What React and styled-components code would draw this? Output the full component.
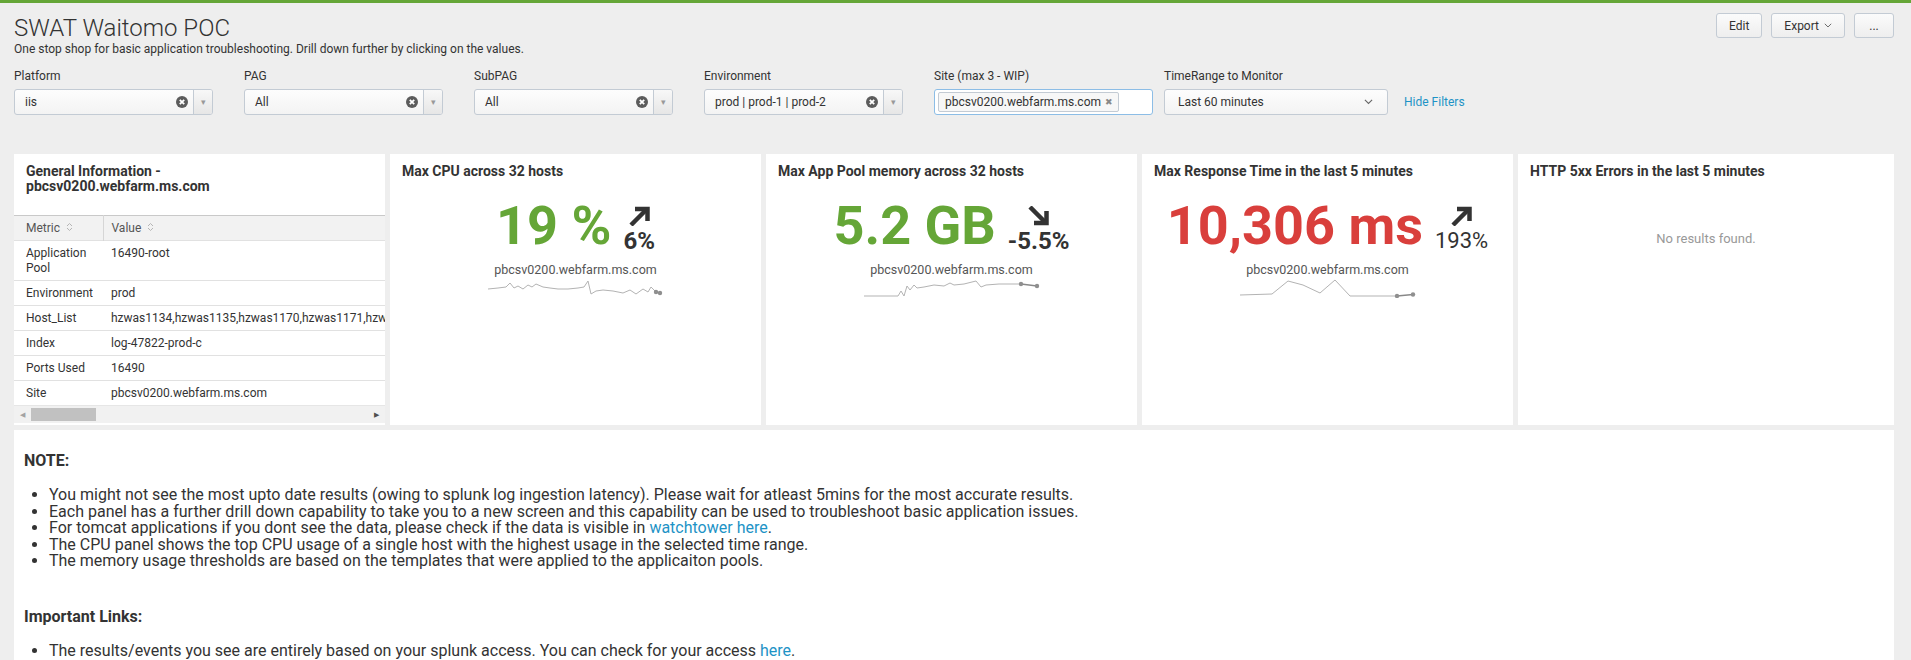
import React from "react";
import styled, { createGlobalStyle } from "styled-components";

const GlobalStyle = createGlobalStyle`
  html, body { margin: 0; padding: 0; }
  body {
    background: #eeeeee;
    font-family: Roboto, "Liberation Sans", Arial, sans-serif;
    color: #333;
    overflow: hidden;
  }
`;

const filters = [
  { label: "Platform", value: "iis", width: 199 },
  { label: "PAG", value: "All", width: 199 },
  { label: "SubPAG", value: "All", width: 199 },
  { label: "Environment", value: "prod | prod-1 | prod-2", width: 199 },
];

const infoRows = [
  ["Application Pool", "16490-root"],
  ["Environment", "prod"],
  ["Host_List", "hzwas1134,hzwas1135,hzwas1170,hzwas1171,hzwas1172,hzwas1173"],
  ["Index", "log-47822-prod-c"],
  ["Ports Used", "16490"],
  ["Site", "pbcsv0200.webfarm.ms.com"],
];

const singles = [
  {
    title: "Max CPU across 32 hosts",
    value: "19 %",
    color: "#65a637",
    delta: "6%",
    up: true,
    weight: 700,
    size: 24,
    spark: [[0,10],[10,9],[18,8],[22,4],[26,9],[30,7],[35,10],[40,6],[44,8],[48,5],[55,8],[62,9],[70,10],[80,10],[90,9],[96,8],[100,2],[103,15],[108,12],[115,11],[125,12],[135,14],[142,11],[148,15],[155,10],[160,13],[163,8],[168,13],[172,14]],
    tail: [[168,13],[172,14]],
  },
  {
    title: "Max App Pool memory across 32 hosts",
    value: "5.2 GB",
    color: "#65a637",
    delta: "-5.5%",
    up: false,
    weight: 700,
    size: 24,
    spark: [[0,17],[34,17],[37,12],[40,17],[43,7],[46,11],[50,6],[53,9],[60,8],[70,6],[80,7],[86,4],[90,6],[100,5],[112,2],[117,8],[122,6],[135,5],[145,5],[157,5]],
    tail: [[157,5],[173,7]],
  },
  {
    title: "Max Response Time in the last 5 minutes",
    value: "10,306 ms",
    color: "#d93f3c",
    delta: "193%",
    up: true,
    weight: 400,
    size: 22,
    spark: [[0,16],[32,15],[48,2],[63,6],[80,14],[95,1],[110,17],[157,17]],
    tail: [[157,17],[173,15.5]],
  },
];

function ClearIcon() {
  return (
    <svg width="12" height="12" viewBox="0 0 12 12">
      <circle cx="6" cy="6" r="6" fill="#5c5c5c" />
      <path d="M3.8 3.8 L8.2 8.2 M8.2 3.8 L3.8 8.2" stroke="#fff" strokeWidth="1.8" />
    </svg>
  );
}

function SortIcon() {
  return (
    <svg width="7" height="10" viewBox="0 0 7 10">
      <path d="M1 4 L3.5 1.5 L6 4 M1 6 L3.5 8.5 L6 6" stroke="#b5b5b5" strokeWidth="1" fill="none" />
    </svg>
  );
}

function Chevron({ size = 9, color = "#555" }) {
  return (
    <svg width={size} height={size * 0.6} viewBox="0 0 10 6">
      <path d="M1 1 L5 5 L9 1" stroke={color} strokeWidth="1.2" fill="none" />
    </svg>
  );
}

function TrendArrow({ up }) {
  return (
    <svg width="23" height="20" viewBox="0 0 23 20">
      {up ? (
        <g stroke="#333" strokeWidth="4.5" fill="none" strokeLinejoin="miter">
          <path d="M3 19 L18 4" />
          <path d="M7 3 H19.5 V15" />
        </g>
      ) : (
        <g stroke="#333" strokeWidth="4.5" fill="none" strokeLinejoin="miter">
          <path d="M3 1 L18 16" />
          <path d="M19.5 5 V17 H7" />
        </g>
      )}
    </svg>
  );
}

function Sparkline({ points, tail }) {
  const line = points.map((p) => p.join(",")).join(" ");
  return (
    <svg width="176" height="20" viewBox="0 -1 176 20">
      <polyline points={line} fill="none" stroke="#b3b3b3" strokeWidth="1" />
      <polyline points={tail.map((p) => p.join(",")).join(" ")} fill="none" stroke="#888" strokeWidth="1.3" />
      {tail.map((p, i) => (
        <circle key={i} cx={p[0]} cy={p[1]} r="2.2" fill="#8f8f8f" />
      ))}
    </svg>
  );
}

export default function App() {
  return (
    <Page>
      <GlobalStyle />
      <Header>
        <div>
          <Title>SWAT Waitomo POC</Title>
          <Description>
            One stop shop for basic application troubleshooting. Drill down further by clicking on the values.
          </Description>
        </div>
        <Actions>
          <Button>Edit</Button>
          <Button>
            Export <Chevron size={8} color="#666" />
          </Button>
          <Button $wide>...</Button>
        </Actions>
      </Header>

      <Filters>
        {filters.map((f) => (
          <Field key={f.label}>
            <Label>{f.label}</Label>
            <Select $w={f.width}>
              <SelectValue>{f.value}</SelectValue>
              <ClearWrap>
                <ClearIcon />
              </ClearWrap>
              <Toggle>▾</Toggle>
            </Select>
          </Field>
        ))}
        <Field>
          <Label>Site (max 3 - WIP)</Label>
          <Multi>
            <Token>
              pbcsv0200.webfarm.ms.com <TokenX>✖</TokenX>
            </Token>
          </Multi>
        </Field>
        <Field $auto>
          <Label>TimeRange to Monitor</Label>
          <Row>
            <TimeSelect>
              <span>Last 60 minutes</span>
              <Chevron size={9} color="#666" />
            </TimeSelect>
            <HideLink>Hide Filters</HideLink>
          </Row>
        </Field>
      </Filters>

      <PanelRow>
        <Panel>
          <InfoTitle>General Information - pbcsv0200.webfarm.ms.com</InfoTitle>
          <TableClip>
            <Table>
              <colgroup>
                <col style={{ width: 89 }} />
                <col />
              </colgroup>
              <thead>
                <tr>
                  <Th>
                    Metric <SortIcon />
                  </Th>
                  <Th>
                    Value <SortIcon />
                  </Th>
                </tr>
              </thead>
              <tbody>
                {infoRows.map(([k, v]) => (
                  <tr key={k}>
                    <Td>{k}</Td>
                    <Td $nowrap>{v}</Td>
                  </tr>
                ))}
              </tbody>
            </Table>
          </TableClip>
          <ScrollBar>
            <ScrollArrow $color="#a3a3a3">◀</ScrollArrow>
            <ScrollThumb />
            <ScrollArrow $color="#505050">▶</ScrollArrow>
          </ScrollBar>
        </Panel>

        {singles.map((s) => (
          <Panel key={s.title}>
            <PanelTitle>{s.title}</PanelTitle>
            <SingleBody>
              <ValueRow>
                <BigValue $color={s.color}>{s.value}</BigValue>
                <Delta>
                  <TrendArrow up={s.up} />
                  <DeltaText $weight={s.weight} $size={s.size}>{s.delta}</DeltaText>
                </Delta>
              </ValueRow>
              <Underlabel>pbcsv0200.webfarm.ms.com</Underlabel>
              <Sparkline points={s.spark} tail={s.tail} />
            </SingleBody>
          </Panel>
        ))}

        <Panel $last>
          <PanelTitle>HTTP 5xx Errors in the last 5 minutes</PanelTitle>
          <NoResults>No results found.</NoResults>
        </Panel>
      </PanelRow>

      <NotePanel>
        <NoteHeading>NOTE:</NoteHeading>
        <NoteList>
          <li>You might not see the most upto date results (owing to splunk log ingestion latency). Please wait for atleast 5mins for the most accurate results.</li>
          <li>Each panel has a further drill down capability to take you to a new screen and this capability can be used to troubleshoot basic application issues.</li>
          <li>For tomcat applications if you dont see the data, please check if the data is visible in <Link>watchtower here</Link>.</li>
          <li>The CPU panel shows the top CPU usage of a single host with the highest usage in the selected time range.</li>
          <li>The memory usage thresholds are based on the templates that were applied to the applicaiton pools.</li>
        </NoteList>
        <NoteHeading $gap>Important Links:</NoteHeading>
        <NoteList>
          <li>The results/events you see are entirely based on your splunk access. You can check for your access <Link>here</Link>.</li>
          <li>The SWAT 2.0 dashboard is maintained by the application support team, raise a request to get it updated.</li>
        </NoteList>
      </NotePanel>
    </Page>
  );
}

const Page = styled.div`
  border-top: 3px solid #65a637;
  padding: 0 17px 0 14px;
  min-height: 657px;
`;

const Header = styled.div`
  display: flex;
  justify-content: space-between;
  align-items: flex-start;
  padding-top: 10px;
`;

const Title = styled.h1`
  margin: 1px 0 0;
  font-size: 24px;
  font-weight: 300;
  line-height: 28px;
  color: #333;
`;

const Description = styled.p`
  margin: 0;
  font-size: 12px;
  line-height: 14px;
  color: #333;
`;

const Actions = styled.div`
  display: flex;
  gap: 9px;
`;

const Button = styled.button`
  height: 25px;
  min-width: ${(p) => (p.$wide ? "40px" : "auto")};
  padding: 0 12px;
  display: flex;
  align-items: center;
  justify-content: center;
  gap: 5px;
  border: 1px solid #c3cbd4;
  border-radius: 3px;
  background: linear-gradient(#fbfbfb, #eeeeee);
  font-family: Roboto, "Liberation Sans", Arial, sans-serif;
  font-size: 12px;
  color: #333;
`;

const Filters = styled.div`
  display: flex;
  align-items: flex-end;
  margin-top: 12px;
`;

const Field = styled.div`
  width: ${(p) => (p.$auto ? "auto" : "230px")};
  flex: none;
`;

const Label = styled.div`
  font-size: 12px;
  line-height: 16px;
  margin-bottom: 5px;
  color: #333;
`;

const Row = styled.div`
  display: flex;
  align-items: center;
`;

const Select = styled.div`
  width: ${(p) => p.$w}px;
  height: 26px;
  box-sizing: border-box;
  display: flex;
  align-items: center;
  border: 1px solid #c3cbd4;
  border-radius: 3px;
  background: linear-gradient(#fdfdfd, #f3f3f3);
  overflow: hidden;
`;

const SelectValue = styled.span`
  flex: 1;
  padding-left: 10px;
  font-size: 12px;
  color: #333;
  white-space: nowrap;
`;

const ClearWrap = styled.span`
  display: flex;
  margin-right: 5px;
`;

const Toggle = styled.span`
  width: 18px;
  align-self: stretch;
  display: flex;
  align-items: center;
  justify-content: center;
  border-left: 1px solid #c3cbd4;
  background: linear-gradient(#f8f8f8, #e6e6e6);
  font-size: 9px;
  color: #999;
`;

const Multi = styled.div`
  width: 219px;
  height: 26px;
  box-sizing: border-box;
  display: flex;
  align-items: center;
  padding: 0 3px;
  border: 1px solid #8cbde6;
  border-radius: 3px;
  background: #fff;
`;

const Token = styled.span`
  height: 20px;
  box-sizing: border-box;
  display: inline-flex;
  align-items: center;
  gap: 4px;
  padding: 0 5px 0 6px;
  border: 1px solid #c3cbd4;
  border-radius: 2px;
  background: #f7f7f7;
  font-size: 12px;
  color: #333;
`;

const TokenX = styled.span`
  font-size: 9px;
  color: #888;
`;

const TimeSelect = styled.div`
  width: 224px;
  height: 26px;
  box-sizing: border-box;
  display: flex;
  align-items: center;
  justify-content: space-between;
  padding: 0 14px 0 13px;
  border: 1px solid #c3cbd4;
  border-radius: 3px;
  background: linear-gradient(#fdfdfd, #f3f3f3);
  font-size: 12px;
  color: #333;
`;

const HideLink = styled.a`
  margin-left: 16px;
  font-size: 12px;
  color: #1e93c6;
`;

const PanelRow = styled.div`
  display: flex;
  gap: 5px;
  height: 271px;
  margin-top: 39px;
`;

const Panel = styled.div`
  flex: ${(p) => (p.$last ? "1 1 0" : "0 0 371px")};
  min-width: 0;
  background: #fff;
  display: flex;
  flex-direction: column;
  overflow: hidden;
`;

const PanelTitle = styled.h3`
  margin: 0;
  padding: 10px 12px 0;
  font-size: 14px;
  font-weight: 700;
  line-height: 15px;
  color: #333;
`;

const InfoTitle = styled(PanelTitle)`
  height: 61px;
  box-sizing: border-box;
  max-width: 230px;
`;

const TableClip = styled.div`
  flex: 1;
  overflow: hidden;
`;

const Table = styled.table`
  width: 600px;
  table-layout: fixed;
  border-collapse: collapse;
  font-size: 12px;
  line-height: 15px;
  color: #333;
`;

const Th = styled.th`
  padding: 5px 8px 4px;
  text-align: left;
  font-weight: 400;
  color: #555;
  background: #f2f2f2;
  border-top: 1px solid #c9c9c9;
  &:first-child {
    padding-left: 12px;
    border-right: 1px solid #d6d6d6;
  }
  svg { margin-left: 3px; }
`;

const Td = styled.td`
  padding: 5px 8px 4px;
  border-top: 1px solid #e1e1e1;
  vertical-align: top;
  white-space: ${(p) => (p.$nowrap ? "nowrap" : "normal")};
  overflow: hidden;
  &:first-child { padding-left: 12px; }
`;

const ScrollBar = styled.div`
  height: 17px;
  margin-bottom: 2px;
  display: flex;
  align-items: center;
  background: #f1f1f1;
  border-top: 1px solid #e6e6e6;
`;

const ScrollArrow = styled.span`
  width: 17px;
  text-align: center;
  font-size: 7px;
  color: ${(p) => p.$color};
  &:last-child { margin-left: auto; }
`;

const ScrollThumb = styled.span`
  width: 65px;
  height: 13px;
  background: #c1c1c1;
`;

const SingleBody = styled.div`
  display: flex;
  flex-direction: column;
  align-items: center;
  margin-top: 19px;
`;

const ValueRow = styled.div`
  display: flex;
  align-items: flex-end;
`;

const BigValue = styled.div`
  font-size: 54px;
  font-weight: 700;
  line-height: 56px;
  color: ${(p) => p.$color};
  white-space: nowrap;
`;

const Delta = styled.div`
  display: flex;
  flex-direction: column;
  align-items: center;
  margin-left: 12px;
  margin-bottom: 1px;
  svg { margin-bottom: 3px; }
`;

const DeltaText = styled.div`
  font-size: ${(p) => p.$size}px;
  font-weight: ${(p) => p.$weight};
  line-height: 24px;
  color: #333;
`;

const Underlabel = styled.div`
  margin-top: 8px;
  font-size: 12.5px;
  line-height: 16px;
  color: #555;
`;

const NoResults = styled.div`
  margin-top: 52px;
  text-align: center;
  font-size: 13px;
  line-height: 16px;
  color: #999;
`;

const NotePanel = styled.div`
  margin-top: 5px;
  background: #fff;
  padding: 22px 10px 20px;
`;

const NoteHeading = styled.div`
  margin-top: ${(p) => (p.$gap ? "38px" : "0")};
  font-size: 16px;
  font-weight: 700;
  line-height: 18px;
  color: #333;
`;

const NoteList = styled.ul`
  margin: 17px 0 0;
  padding-left: 25px;
  font-size: 16px;
  line-height: 16.5px;
  color: #333;
`;

const Link = styled.a`
  color: #1e93c6;
`;
